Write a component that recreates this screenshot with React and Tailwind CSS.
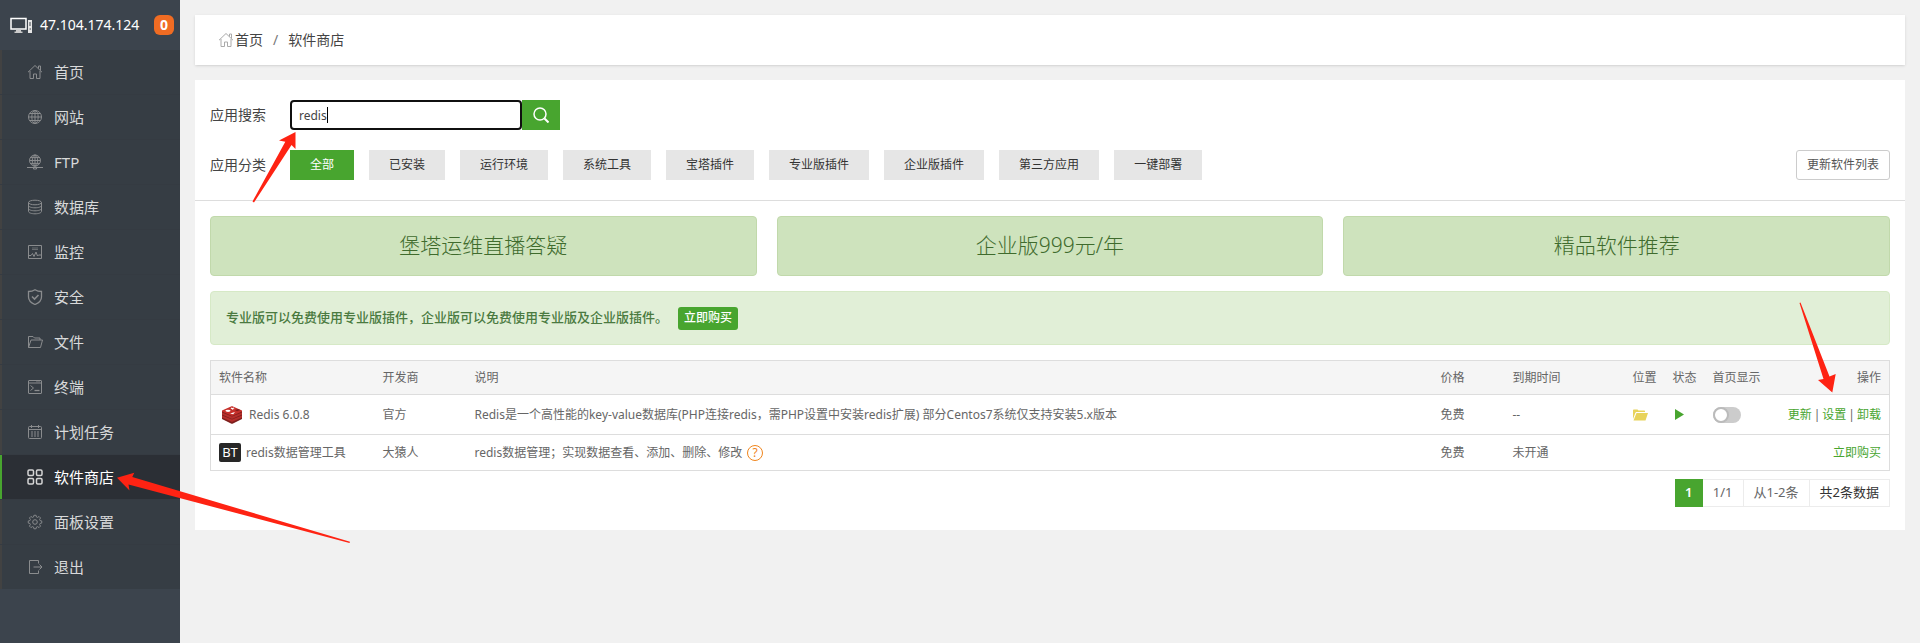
import React, { useState } from "react";

const iconProps = {
  width: 16,
  height: 16,
  viewBox: "0 0 16 16",
  fill: "none",
  stroke: "currentColor",
  strokeWidth: 1,
};

const HomeIcon = () => (
  <svg {...iconProps}>
    <path d="M1 8.2 8 1.5l7 6.7M11.5 4.6V2h2v4.4M3 7v7.5h3.5V10h3v4.5H13V7" />
  </svg>
);

const SiteIcon = () => (
  <svg {...iconProps}>
    <circle cx="8" cy="8" r="6.5" />
    <ellipse cx="8" cy="8" rx="3.2" ry="6.5" />
    <path d="M8 1.5v13M1.5 8h13M2.6 4.5h10.8M2.6 11.5h10.8" />
  </svg>
);

const FtpIcon = () => (
  <svg {...iconProps}>
    <circle cx="8" cy="6.5" r="5.5" />
    <ellipse cx="8" cy="6.5" rx="2.7" ry="5.5" />
    <path d="M8 1v11M2.5 6.5h11M3.3 3.6h9.4M3.3 9.4h9.4M0 13.5h16M6.5 13h3v2h-3z" />
  </svg>
);

const DatabaseIcon = () => (
  <svg {...iconProps}>
    <ellipse cx="8" cy="3.5" rx="6.5" ry="2.3" />
    <path d="M1.5 3.5v9c0 1.3 3 2.3 6.5 2.3s6.5-1 6.5-2.3v-9" />
    <path d="M1.5 6.5c0 1.3 3 2.3 6.5 2.3s6.5-1 6.5-2.3M1.5 9.5c0 1.3 3 2.3 6.5 2.3s6.5-1 6.5-2.3" />
  </svg>
);

const MonitorIcon = () => (
  <svg {...iconProps}>
    <path d="M1.5 1.5h13v13h-13z" />
    <path opacity="0.6" d="M5 4h6M5 5.5h6" />
    <path d="M1.5 11.5h2.5l1.5-2 1.5 3L9 8l1.5 4 1-1h3" />
  </svg>
);

const ShieldIcon = () => (
  <svg {...iconProps} strokeWidth={1.3}>
    <path d="M8 .7c2 1.3 4.2 1.8 6.5 1.8V8c0 3.5-2.8 6-6.5 7.5C4.300 14 1.500 11.5 1.500 8V2.500C3.800 2.500 6 2 8 .7z" />
    <path strokeWidth="1.6" d="m5 7.500 2.500 2.500L11.500 6" />
  </svg>
);

const FolderIcon = () => (
  <svg {...iconProps}>
    <path d="M1.5 13.5v-11H6L7.5 4H13v2M1.5 13.5 4 6h11.5l-2 7.5z" />
  </svg>
);

const TerminalIcon = () => (
  <svg {...iconProps}>
    <rect x="1.5" y="1.5" width="13" height="13" rx="0.5" />
    <path d="M1.5 4h13M9.5 2.7h1M11.5 2.7h1M3.5 6.5l3 2.500-3 2.500" />
    <path strokeWidth="1.3" d="M7.5 11.5h5" />
  </svg>
);

const CalendarIcon = () => (
  <svg {...iconProps}>
    <rect x="1.5" y="2.5" width="13" height="12" rx="1" />
    <path d="M1.5 5.5h13M4.5 1v3M11.5 1v3" />
    <path strokeDasharray="2 1" d="M4 8h8M4 10h8M4 12h8" />
  </svg>
);

const AppsIcon = () => (
  <svg {...iconProps} strokeWidth={1.5}>
    <rect x="1" y="1" width="5.5" height="5.5" rx="1.2" />
    <rect x="9.5" y="1" width="5.5" height="5.5" rx="1.2" />
    <rect x="1" y="9.5" width="5.5" height="5.5" rx="1.2" />
    <rect x="9.5" y="9.5" width="5.5" height="5.5" rx="1.2" />
  </svg>
);

const GearIcon = () => (
  <svg {...iconProps}>
    <path
      transform="translate(.8 .1) scale(.9)"
      d="M6.8 1.3h2.400l.4 1.900 1.300.5 1.600-1.100 1.700 1.700-1.100 1.600.5 1.300 1.900.4v2.400l-1.900.4-.5 1.300 1.100 1.600-1.700 1.700-1.600-1.100-1.300.5-.4 1.900H6.800l-.4-1.900-1.300-.5-1.600 1.100-1.700-1.700 1.100-1.600-.5-1.300-1.900-.4V7.600l1.900-.4.5-1.300-1.100-1.600 1.700-1.700 1.600 1.100 1.300-.5z"
    />
    <circle cx="8" cy="8" r="2.3" />
  </svg>
);

const ExitIcon = () => (
  <svg {...iconProps}>
    <path d="M11.5 4.5v-3h-9v13h9v-3M6.5 8H15M12.5 5.500 15 8l-2.500 2.500" />
  </svg>
);

const RedisIcon = () => (
  <svg width="20" height="18" viewBox="0 0 20 18">
    <path fill="#7e1f1d" d="M0 5v8l9 4.500c.7.300 1.300.300 2 0l9-4.500V5z" />
    <path
      fill="#b52e2b"
      d="M0 9.500v2l9 4c.7.300 1.300.300 2 0l9-4v-2l-10 4zM0 6.500v2l9 4c.7.300 1.300.300 2 0l9-4v-2l-10 4z"
    />
    <path
      fill="#c6302b"
      d="m0 4.500 9-4c.7-.3 1.300-.3 2 0l9 4v1l-9 4c-.7.300-1.300.300-2 0l-9-4z"
    />
    <ellipse cx="6" cy="4.8" rx="2.6" ry="1.1" fill="#fff" />
    <path
      fill="#fff"
      d="m9 1.600 1.300.4 1.600-.6-.4 1 1.400.6-2 .2-.6.900-.5-1-1.600-.2 1-.5zM8 7.400l5-1.400-1.800 2.200z"
    />
    <path fill="#7e1f1d" d="m13 4.200 3-1.300 2.200 1-3 1.300z" />
  </svg>
);

const menu = [
  { label: "首页", icon: HomeIcon },
  { label: "网站", icon: SiteIcon },
  { label: "FTP", icon: FtpIcon },
  { label: "数据库", icon: DatabaseIcon },
  { label: "监控", icon: MonitorIcon },
  { label: "安全", icon: ShieldIcon },
  { label: "文件", icon: FolderIcon },
  { label: "终端", icon: TerminalIcon },
  { label: "计划任务", icon: CalendarIcon },
  { label: "软件商店", icon: AppsIcon, active: true },
  { label: "面板设置", icon: GearIcon },
  { label: "退出", icon: ExitIcon },
];

const categories = [
  "全部",
  "已安装",
  "运行环境",
  "系统工具",
  "宝塔插件",
  "专业版插件",
  "企业版插件",
  "第三方应用",
  "一键部署",
];

const banners = ["堡塔运维直播答疑", "企业版999元/年", "精品软件推荐"];

const Sidebar = () => (
  <aside className="w-[180px] shrink-0 bg-[#3c444d]">
    <div className="flex h-[50px] items-center pl-[10px] text-sm text-white">
      <svg width="23" height="17" viewBox="0 0 23 17" fill="none">
        <path d="M1 1.500h15v10.500H1z" stroke="#fff" strokeWidth="1.500" />
        <path d="M6 13h5v2H6zM4.500 14.500h8V16h-8z" fill="#ccc" />
        <path d="M18 3h4v13h-4z" fill="#e6e6e6" />
        <path d="M20 5v4M19.500 12h1.500" stroke="#3c444d" />
      </svg>
      <span className="ml-[7px] grow">47.104.174.124</span>
      <span className="mr-[6px] flex size-5 items-center justify-center rounded-md bg-[#f06c23] font-bold">
        0
      </span>
    </div>
    <nav>
      <ul>
        {menu.map(({ label, icon: Icon, active }) => (
          <li key={label} className="border-b border-[#353b42] last:border-b-0">
            <a
              href="#"
              className={
                active
                  ? "flex h-11 items-center border-l-2 border-[#48a52f] bg-[#2b2f35] pl-[25px] text-[15px] text-white"
                  : "flex h-11 items-center border-l-2 border-[#424242] bg-[#363d44] pl-[25px] text-[15px] text-[#d8d9da]"
              }
            >
              <span className={active ? "text-[#d5d5d5]" : "text-[#8a8c8e]"}>
                <Icon />
              </span>
              <span className="ml-[11px]">{label}</span>
            </a>
          </li>
        ))}
      </ul>
    </nav>
  </aside>
);

const SoftTable = () => {
  const [showHome, setShowHome] = useState(false);

  return (
    <table className="mt-[15px] w-full table-fixed border-collapse border border-[#ddd] text-left text-xs text-[#666]">
      <thead className="bg-[#f5f5f5]">
        <tr className="h-[34px] border-b border-[#ddd] [&>th]:px-2 [&>th]:font-normal">
          <th className="w-[164px]">软件名称</th>
          <th className="w-[92px]">开发商</th>
          <th>说明</th>
          <th className="w-[72px]">价格</th>
          <th className="w-[120px]">到期时间</th>
          <th className="w-10">位置</th>
          <th className="w-10">状态</th>
          <th className="w-[72px]">首页显示</th>
          <th className="w-[113px] text-right">操作</th>
        </tr>
      </thead>
      <tbody>
        <tr className="h-10 border-b border-[#ddd] [&>td]:px-2">
          <td>
            <div className="flex items-center gap-[7px] pl-[3px]">
              <RedisIcon />
              <span>Redis 6.0.8</span>
            </div>
          </td>
          <td>官方</td>
          <td>
            Redis是一个高性能的key-value数据库(PHP连接redis，需PHP设置中安装redis扩展)
            部分Centos7系统仅支持安装5.x版本
          </td>
          <td>免费</td>
          <td>--</td>
          <td>
            <svg width="15" height="12" viewBox="0 0 15 12" fill="#e8d35b">
              <path d="M0 10V1.500C0 .7.500.5 1 .5h3.500l1 1H11c.8 0 1 .4 1 1V3H4C3 3 2.500 3.500 2.200 4.200z" />
              <path d="M3.500 4H15l-2.500 7.500H.5z" />
            </svg>
          </td>
          <td>
            <svg width="13" height="11" viewBox="0 0 13 11" fill="#48a52f">
              <path d="M2 0v11l9-5.500z" />
            </svg>
          </td>
          <td>
            <label className="block w-7 cursor-pointer">
              <input
                type="checkbox"
                aria-label="首页显示"
                className="peer sr-only"
                checked={showHome}
                onChange={(e) => setShowHome(e.target.checked)}
              />
              <span className="flex h-4 w-7 items-center rounded-full bg-[#ccc] peer-checked:justify-end peer-checked:bg-[#48a52f]">
                <span className="size-4 rounded-full border-2 border-[#bbb] bg-white" />
              </span>
            </label>
          </td>
          <td>
            <div className="flex justify-end gap-0.5">
              <a href="#" className="text-[#48a52f]">更新</a>
              <span>|</span>
              <a href="#" className="text-[#48a52f]">设置</a>
              <span>|</span>
              <a href="#" className="text-[#48a52f]">卸载</a>
            </div>
          </td>
        </tr>
        <tr className="h-9 [&>td]:px-2">
          <td>
            <div className="flex items-center gap-[5px]">
              <span className="flex h-[19px] w-[22px] items-center justify-center rounded-xs bg-[#272727] text-[13px] text-white">
                BT
              </span>
              <span>redis数据管理工具</span>
            </div>
          </td>
          <td>大猿人</td>
          <td>
            <div className="flex items-center gap-[5px]">
              redis数据管理；实现数据查看、添加、删除、修改
              <a
                href="#"
                className="flex size-4 items-center justify-center rounded-full border border-[#f0851c] text-[#f0851c]"
              >
                ?
              </a>
            </div>
          </td>
          <td>免费</td>
          <td>未开通</td>
          <td></td>
          <td></td>
          <td></td>
          <td className="text-right">
            <a href="#" className="text-[#48a52f]">立即购买</a>
          </td>
        </tr>
      </tbody>
    </table>
  );
};

const App = () => {
  const [search, setSearch] = useState("redis");
  const [category, setCategory] = useState("全部");

  return (
    <div className="relative flex min-h-screen overflow-hidden bg-[#f1f1f1] font-['Noto_Sans','Noto_Sans_CJK_SC',sans-serif] text-[#444]">
      <Sidebar />

      <main className="min-w-0 grow p-[15px]">
        <div className="flex h-[50px] items-center bg-white pl-[23px] text-sm shadow-sm">
          <span className="text-[#aaa]">
            <HomeIcon />
          </span>
          <a href="#" className="ml-px">首页</a>
          <span className="px-[10px] text-[#777]">/</span>
          <a href="#">软件商店</a>
        </div>

        <div className="mt-[15px] bg-white pb-[23px]">
          <div className="border-b border-[#ddd] px-[15px] py-5">
            <div className="flex h-[30px] items-center">
              <label htmlFor="search" className="w-20 text-sm">
                应用搜索
              </label>
              <div className="relative">
                <input
                  id="search"
                  type="text"
                  autoComplete="off"
                  value={search}
                  onChange={(e) => setSearch(e.target.value)}
                  className="peer block h-[30px] w-[232px] rounded border-2 border-[#101010] px-[7px] text-xs outline-none"
                />
                {/* idle caret, the native one takes over on focus */}
                <span className="pointer-events-none absolute top-[7px] left-[37px] h-4 w-px bg-black peer-focus:hidden" />
              </div>
              <button
                type="button"
                aria-label="搜索"
                className="flex h-[30px] w-[38px] items-center justify-center bg-[#48a52f] text-white"
              >
                <svg {...iconProps} strokeWidth={1.5}>
                  <circle cx="7" cy="7" r="6" />
                  <path strokeWidth="2" d="m11.500 11.500 4 4" />
                </svg>
              </button>
            </div>
            <div className="mt-5 flex h-[30px] items-center">
              <span className="w-20 text-sm">应用分类</span>
              <div className="flex grow gap-[15px]">
                {categories.map((name) => (
                  <button
                    key={name}
                    type="button"
                    onClick={() => setCategory(name)}
                    className={
                      name === category
                        ? "h-[30px] bg-[#48a52f] px-5 text-xs text-white"
                        : "h-[30px] bg-[#e6e6e6] px-5 text-xs text-[#333]"
                    }
                  >
                    {name}
                  </button>
                ))}
              </div>
              <button
                type="button"
                className="h-[30px] rounded-[3px] border border-[#ccc] px-[10px] text-xs text-[#555]"
              >
                更新软件列表
              </button>
            </div>
          </div>

          <div className="px-[15px] pt-[15px]">
            <div className="grid grid-cols-3 gap-5">
              {banners.map((text) => (
                <a
                  key={text}
                  href="#"
                  className="flex h-[60px] items-center justify-center rounded border border-[#c1d9ab] bg-[#cee3bd] text-[21px] font-light text-[#3f6b2d]"
                >
                  {text}
                </a>
              ))}
            </div>

            <div className="mt-[15px] flex h-[54px] items-center rounded border border-[#d6e9c6] bg-[#e1efd7] pl-[15px] text-[13px] font-medium text-[#4a7a40]">
              专业版可以免费使用专业版插件，企业版可以免费使用专业版及企业版插件。
              <button
                type="button"
                className="ml-[10px] h-[23px] rounded-[3px] bg-[#48a52f] px-[6px] text-xs text-white"
              >
                立即购买
              </button>
            </div>

            <SoftTable />

            <div className="mt-2 flex justify-end text-[13px] text-[#666]">
              <span className="flex h-7 w-7 items-center justify-center bg-[#48a52f] font-semibold text-white">
                1
              </span>
              <span className="flex h-7 items-center border border-l-0 border-[#ececec] px-[10px]">
                1/1
              </span>
              <span className="flex h-7 items-center border border-l-0 border-[#ececec] px-[10px]">
                从1-2条
              </span>
              <span className="flex h-7 items-center border border-l-0 border-[#ececec] px-[10px] text-[#333]">
                共2条数据
              </span>
            </div>
          </div>
        </div>
      </main>

      {/* hint arrows */}
      <svg
        className="pointer-events-none absolute top-0 left-0"
        width="360"
        height="560"
        fill="#fe2313"
      >
        <path d="M295.500 132 279 140.500l6.300 1.200-32.800 59.800 1.500 1 37.500-57.500 4 4z" />
        <path d="m117 477.700 17.300-5-2 4.300 217.700 64.800-.5 1.200-221-58.500 1 6z" />
      </svg>
      <svg
        className="pointer-events-none absolute top-0 right-0"
        width="130"
        height="400"
        fill="#fe2313"
      >
        <path d="m10.500 302.500 29 74 6.200-2.500-3.400 18.500L28 380l5.500-1L9.500 303z" />
      </svg>
    </div>
  );
};

export default App;
